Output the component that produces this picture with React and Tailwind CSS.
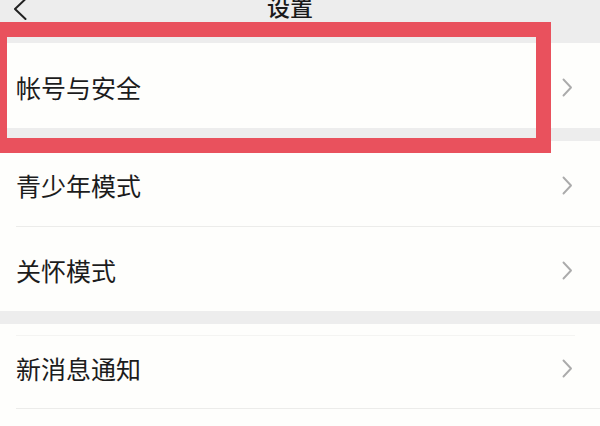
const font = { fontFamily: '"Noto Sans CJK SC", "Noto Sans", sans-serif' };

const Chevron = () => (
  <svg width="11" height="19" viewBox="0 0 11 19" fill="none" className="shrink-0">
    <path d="M1.5 1.5 L9 9.5 L1.5 17.5" stroke="#ababab" strokeWidth="1.9" strokeLinecap="round" strokeLinejoin="round" />
  </svg>
);

const Row = ({ label, divider, height = 'h-[85px]' }) => (
  <div className="bg-[#fefefc]">
    <div className={`${height} flex items-center justify-between pl-4 pr-[27px] pt-[3px]`}>
      <span className="text-[25px] leading-none text-[#1c1c1c]">{label}</span>
      <Chevron />
    </div>
    {divider && <div className="ml-4 h-px bg-[#ececea]" />}
  </div>
);

export default function App() {
  return (
    <div style={font} className="relative w-[600px] h-[426px] overflow-hidden bg-[#ededed]">
      {/* header, cut off at top */}
      <div className="-mt-[31px] h-[74px] flex items-center">
        <div className="w-[40px] flex justify-start pl-[13px] pt-[5px]">
          <svg width="14" height="22" viewBox="0 0 14 22" fill="none">
            <path d="M12.5 1 L2 11 L12.5 21" stroke="#222" strokeWidth="2" strokeLinecap="round" strokeLinejoin="round" />
          </svg>
        </div>
        <div className="flex-1 text-center text-[23px] font-medium text-[#1a1a1a] leading-none">设置</div>
        <div className="w-[60px]" />
      </div>

      <div>
        <Row label="帐号与安全" />
        <div className="h-[13px]" />
        <Row label="青少年模式" divider />
        <Row label="关怀模式" height="h-[84px]" />
        <div className="h-[13px]" />
        <div className="bg-[#fefefc]">
          <div className="h-[11px]" />
          <div className="ml-4 mr-[25px] h-px bg-[#f4f4f2]" />
          <div className="h-[72px] flex items-center justify-between pl-4 pr-[27px] pb-[7px]">
            <span className="text-[25px] leading-none text-[#1c1c1c]">新消息通知</span>
            <Chevron />
          </div>
          <div className="ml-4 h-px bg-[#ececea]" />
          <div className="h-[20px]" />
        </div>
      </div>

      {/* highlight box */}
      <div className="absolute left-[-8px] top-[22px] w-[559px] h-[131px] border-[15px] border-[#e9515d]" />
    </div>
  );
}
